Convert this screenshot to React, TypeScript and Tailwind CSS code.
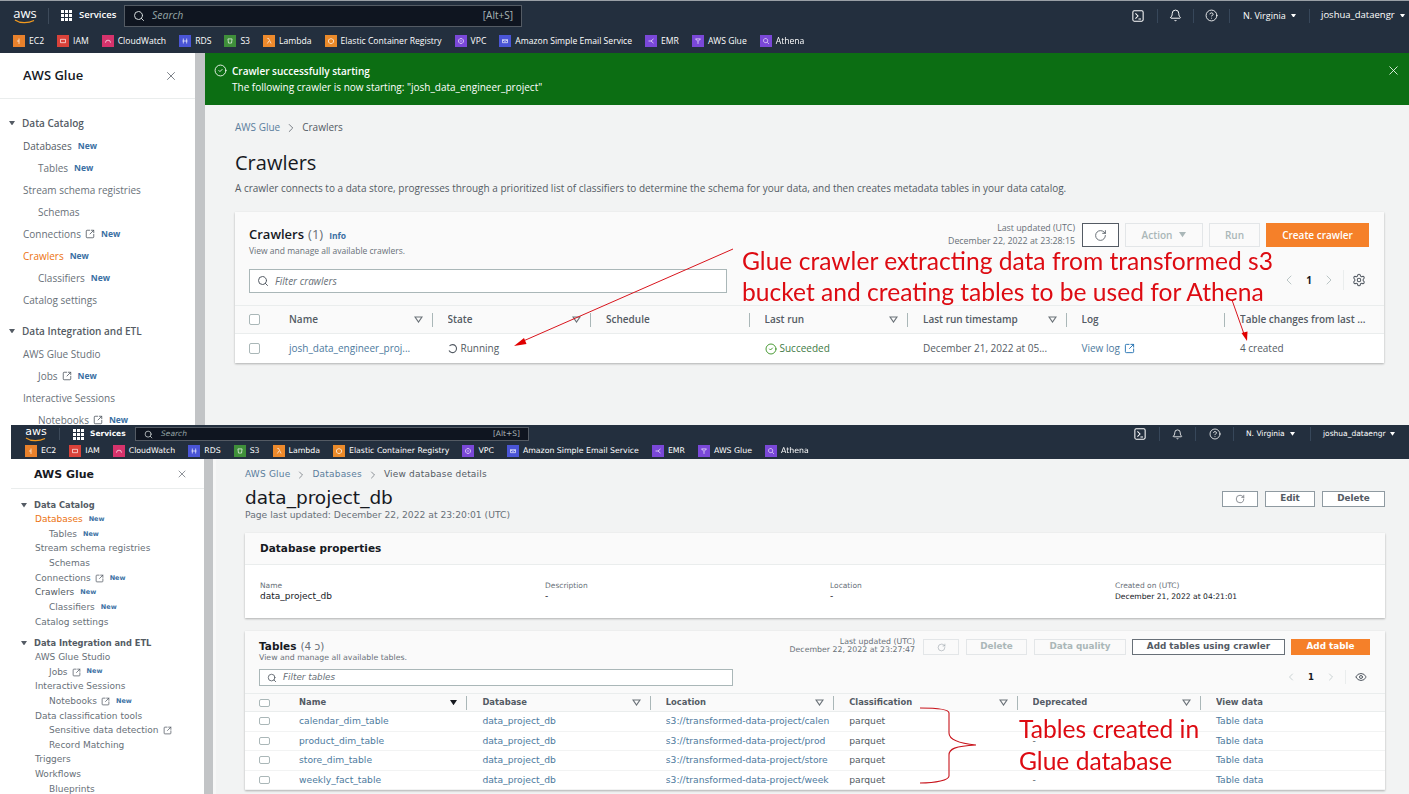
import { ChevronLeft, ChevronRight, CircleCheck, CircleHelp, Bell, Eye, RotateCw, Search, Settings, SquareArrowOutUpRight, X } from "lucide-react";

type Bookmark = { label: string; color: string; glyph: string };
type SideItem = { label: string; level?: 1 | 2; section?: boolean; isNew?: boolean; ext?: boolean };

const bookmarks: Bookmark[] = [
  { label: "EC2", color: "bg-[#e8812c]", glyph: "M6 3v3H3.5M6 6v3.5" },
  { label: "IAM", color: "bg-[#d9423a]", glyph: "M3 4h6v4H3z" },
  { label: "CloudWatch", color: "bg-[#d6336c]", glyph: "M3 8a3 3 0 1 1 6 0" },
  { label: "RDS", color: "bg-[#4a55d6]", glyph: "M4 3v6M8 3v6M3 6h6" },
  { label: "S3", color: "bg-[#3f8f3a]", glyph: "M3.5 3.5h5l-.7 5h-3.6z" },
  { label: "Lambda", color: "bg-[#ed8a2c]", glyph: "M4 3h1.5L8.5 9M6 6 4 9" },
  { label: "Elastic Container Registry", color: "bg-[#ea8a2a]", glyph: "M6 3l3 1.6v3L6 9.400 3 7.600v-3z" },
  { label: "VPC", color: "bg-[#7a48d8]", glyph: "M6 3a3 3 0 1 0 .01 0M6 5v2" },
  { label: "Amazon Simple Email Service", color: "bg-[#4a55d6]", glyph: "M3 4.500h6v3.500H3zM3 4.500l3 2 3-2" },
  { label: "EMR", color: "bg-[#7a48d8]", glyph: "M3 6h3M6 6l3-2.500M6 6l3 2.500" },
  { label: "AWS Glue", color: "bg-[#7a48d8]", glyph: "M3 3.500h6L6 6.500zM6 6.500V9.500" },
  { label: "Athena", color: "bg-[#7a48d8]", glyph: "M5.500 3a2.500 2.500 0 1 0 .01 0M7.500 7.500 9.500 9.500" },
];

const sideItems = (extra: boolean): SideItem[] => [
  { label: "Data Catalog", section: true },
  { label: "Databases", level: 1, isNew: true },
  { label: "Tables", level: 2, isNew: true },
  { label: "Stream schema registries", level: 1 },
  { label: "Schemas", level: 2 },
  { label: "Connections", level: 1, ext: true, isNew: true },
  { label: "Crawlers", level: 1, isNew: true },
  { label: "Classifiers", level: 2, isNew: true },
  { label: "Catalog settings", level: 1 },
  { label: "Data Integration and ETL", section: true },
  { label: "AWS Glue Studio", level: 1 },
  { label: "Jobs", level: 2, ext: true, isNew: true },
  { label: "Interactive Sessions", level: 1 },
  { label: "Notebooks", level: 2, ext: true, isNew: true },
  ...(extra
    ? ([
        { label: "Data classification tools", level: 1 },
        { label: "Sensitive data detection", level: 2, ext: true },
        { label: "Record Matching", level: 2 },
        { label: "Triggers", level: 1 },
        { label: "Workflows", level: 1 },
        { label: "Blueprints", level: 2 },
      ] as SideItem[])
    : []),
];

function AwsLogo({ big }: { big: boolean }) {
  return (
    <div className={big ? "flex w-[24px] flex-col items-center" : "flex w-[22px] flex-col items-center"}>
      <span className={big ? "text-[13px] leading-[11px] text-white" : "text-[11px] leading-[10px] text-white"}>aws</span>
      <svg width="22" height="5" viewBox="0 0 22 5" fill="none">
        <path d="M1 1c5 3.500 13 3.500 19 .5" stroke="#f29a1f" strokeWidth="1.300" />
      </svg>
    </div>
  );
}

function GridIcon({ size }: { size: number }) {
  const cells = [0, 1, 2];
  return (
    <svg width={size} height={size} viewBox="0 0 11 11" fill="#fff">
      {cells.map((r) => cells.map((c) => <rect key={`${r}-${c}`} x={c * 4} y={r * 4} width="3" height="3" />))}
    </svg>
  );
}

function TerminalIcon({ size }: { size: number }) {
  return (
    <svg width={size} height={size} viewBox="0 0 14 14" fill="none" stroke="#fff" strokeWidth="1.200">
      <rect x="1" y="1" width="12" height="12" rx="1.500" />
      <path d="M4 4l3 3-3 3M7.500 10.500H10.500" />
    </svg>
  );
}

function Caret({ className }: { className: string }) {
  return (
    <svg viewBox="0 0 8 6" className={className} fill="currentColor">
      <path d="M0 0h8L4 6z" />
    </svg>
  );
}

function FilterCaret() {
  return (
    <svg width="9" height="7" viewBox="0 0 9 7" fill="none" stroke="#6b7278" strokeWidth="1.200" className="shrink-0">
      <path d="M1 1h7L4.500 6z" />
    </svg>
  );
}

function Spinner() {
  return (
    <svg width="10" height="10" viewBox="0 0 10 10" fill="none" stroke="#545b64" strokeWidth="1.100">
      <path d="M1.500 2a4 4 0 1 1-.5 4.500" />
    </svg>
  );
}

function TopNav({ big }: { big: boolean }) {
  return (
    <div className={big ? "h-[53px] shrink-0 border-t border-[#9aa0a6] bg-[#232f3e] text-white font-['Open_Sans',sans-serif]" : "h-[34px] shrink-0 bg-[#232f3e] text-white font-['DejaVu_Sans',sans-serif]"}>
      <div className={big ? "flex h-[29px] items-center pl-[13px]" : "flex h-[18px] items-center pl-[14px]"}>
        <AwsLogo big={big} />
        <div className={big ? "ml-[11px] h-[16px] w-px bg-[#3d4a5a]" : "ml-[12px] h-[12px] w-px bg-[#3d4a5a]"} />
        <div className={big ? "ml-[12px]" : "ml-[13px]"}>
          <GridIcon size={11} />
        </div>
        <span className={big ? "ml-[7px] w-[37px] text-[9.500px] font-semibold whitespace-nowrap" : "ml-[6px] w-[34px] text-[7.500px] font-semibold whitespace-nowrap"}>Services</span>
        <div className={big ? "ml-[8px] flex h-[22px] w-[398px] items-center border border-[#545b64] bg-[#0f1520] px-[8px]" : "ml-[11px] flex h-[14px] w-[394px] items-center border border-[#545b64] bg-[#0f1520] px-[8px]"}>
          <Search size={big ? 12 : 9} strokeWidth={2} className="text-[#d5dbdb]" />
          <span className={big ? "ml-[7px] flex-1 text-[10.500px] italic text-[#95a5a6]" : "ml-[8px] flex-1 text-[7.500px] italic text-[#95a5a6]"}>Search</span>
          <span className={big ? "text-[10px] text-[#aab7b8]" : "text-[7.500px] text-[#aab7b8]"}>[Alt+S]</span>
        </div>
        <div className="flex-1" />
        <div className="flex items-center">
          <div className="flex w-[38px] justify-center">
            <TerminalIcon size={12} />
          </div>
          <div className="h-[14px] w-px bg-[#37475a]" />
          <div className="flex w-[35px] justify-center">
            <Bell size={big ? 13 : 11} strokeWidth={1.800} />
          </div>
          <div className="h-[14px] w-px bg-[#37475a]" />
          <div className={big ? "flex w-[35px] justify-center" : "flex w-[37px] justify-center"}>
            <CircleHelp size={big ? 13 : 12} strokeWidth={1.600} />
          </div>
          <div className="h-[14px] w-px bg-[#37475a]" />
          <div className={big ? "flex w-[79px] items-center gap-[5px] pl-[13px] text-[9px]" : "flex w-[76px] items-center gap-[5px] pl-[12px] text-[7.500px]"}>
            <span>N. Virginia</span>
            <Caret className="w-[5px]" />
          </div>
          <div className="h-[14px] w-px bg-[#37475a]" />
          <div className={big ? "flex w-[99px] items-center gap-[5px] pl-[11px] text-[9.500px]" : "flex w-[98px] items-center gap-[4px] pl-[12px] text-[7.500px]"}>
            <span>joshua_dataengr</span>
            <Caret className="w-[5px]" />
          </div>
        </div>
      </div>
      <div className={big ? "flex h-[23px] items-center gap-[13px] pl-[13px]" : "flex h-[16px] items-center gap-[13px] pl-[14px]"}>
        {bookmarks.map((b) => (
          <div key={b.label} className={big ? "flex items-center gap-[4px] text-[8.600px] whitespace-nowrap" : "flex items-center gap-[4px] text-[7.800px] whitespace-nowrap"}>
            <span className={`flex h-[12px] w-[12px] items-center justify-center ${b.color}`}>
              <svg width="10" height="10" viewBox="0 0 12 12" fill="none" stroke="#fff" strokeOpacity="0.800" strokeWidth="1">
                <path d={b.glyph} />
              </svg>
            </span>
            <span>{b.label}</span>
          </div>
        ))}
      </div>
    </div>
  );
}

function Sidebar({ big, active, dark }: { big: boolean; active: string; dark: string }) {
  const items = sideItems(!big);
  return (
    <div className={big ? "flex w-[205px] shrink-0 font-['Open_Sans',sans-serif]" : "flex w-[205px] shrink-0 font-['DejaVu_Sans',sans-serif]"}>
      <div className={big ? "w-[195px] bg-white" : "w-[193px] bg-white"}>
        <div className={big ? "flex h-[46px] items-center justify-between border-b border-[#eaeded] pl-[23px] pr-[17px]" : "flex h-[30px] items-center justify-between border-b border-[#eaeded] pl-[23px] pr-[16px]"}>
          <span className={big ? "text-[13px] font-semibold text-[#16191f]" : "mt-[3px] text-[11px] font-semibold text-[#16191f]"}>AWS Glue</span>
          <X size={big ? 14 : 12} strokeWidth={1.300} className="text-[#545b64]" />
        </div>
        <div className={big ? "pt-[12px]" : "pt-[9px]"}>
          {items.map((item) => {
            const color = item.label === active ? "text-[#ec7211]" : item.label === dark ? "text-[#545b64] font-medium" : "text-[#687078]";
            const indent = item.section ? (big ? "pl-[9px]" : "pl-[10px]") : item.level === 2 ? "pl-[38px]" : big ? "pl-[23px]" : "pl-[24px]";
            const sectionGap = item.label === "Data Integration and ETL" ? (big ? "mt-[8px]" : "mt-[6px]") : "";
            const height = big ? (item.section ? "h-[24px]" : "h-[22px]") : "h-[14.650px]";
            return (
              <div key={item.label} className={`flex items-center ${height} ${indent} ${sectionGap} ${big ? "text-[10px]" : "text-[9px]"} whitespace-nowrap`}>
                {item.section && <Caret className="mr-[7px] w-[6px] text-[#545b64]" />}
                <span className={item.section ? (big ? "font-semibold text-[#545b64]" : "text-[8.300px] font-semibold text-[#545b64]") : color}>{item.label}</span>
                {item.ext && <SquareArrowOutUpRight size={big ? 10 : 9} strokeWidth={2} className="ml-[4px] text-[#545b64]" />}
                {item.isNew && <span className={big ? "ml-[6px] text-[8.500px] font-bold text-[#3a6fa3]" : "ml-[6px] text-[6.500px] font-bold text-[#3a6fa3]"}>New</span>}
              </div>
            );
          })}
        </div>
      </div>
      <div className={big ? "w-[10px] bg-[#c2c4c6]" : "w-[9px] bg-[#c2c4c6]"} />
      {!big && <div className="w-[3px] bg-[#f7f7f7]" />}
    </div>
  );
}

function Button({ children, className }: { children: React.ReactNode; className: string }) {
  return <div className={`flex shrink-0 items-center justify-center border font-semibold ${className}`}>{children}</div>;
}

function Th({ label, filter = true, last = false, sort = false }: { label: string; filter?: boolean; last?: boolean; sort?: boolean }) {
  return (
    <div className={last ? "flex items-center whitespace-nowrap" : "flex items-center pr-[15px]"}>
      <span className="flex-1 truncate font-semibold text-[#545b64]">{label}</span>
      {filter && (sort ? <Caret className="w-[7px] text-[#16191f]" /> : <FilterCaret />)}
      {!last && <div className="ml-[9px] h-[14px] w-px bg-[#aab7b8]" />}
    </div>
  );
}

function Checkbox({ size }: { size: string }) {
  return <div className={`rounded-[2px] border border-[#aab7b8] bg-white ${size}`} />;
}

function CrawlerShot() {
  return (
    <div className="flex h-[425px] shrink-0 flex-col overflow-hidden blur-[0.3px]">
      <TopNav big />
      <div className="flex flex-1 overflow-hidden">
        <Sidebar big active="Crawlers" dark="Databases" />
        <div className="min-w-0 flex-1 bg-[#f2f3f3] font-['Open_Sans',sans-serif]">
          <div className="flex h-[52px] items-start justify-between bg-[#0c6e13] pl-[9px] pr-[8px] pt-[10px] text-white">
            <div className="flex gap-[5px]">
              <CircleCheck size={13} strokeWidth={1.600} className="mt-[1px]" />
              <div className="text-[10px] leading-[16px]">
                <div className="font-semibold">Crawler successfully starting</div>
                <div>The following crawler is now starting: "josh_data_engineer_project"</div>
              </div>
            </div>
            <X size={15} strokeWidth={1.300} />
          </div>
          <div className="pl-[30px] pr-[25px]">
            <div className="mt-[15px] flex h-[15px] items-center text-[10px] text-[#5a7d9c]">
              <span>AWS Glue</span>
              <ChevronRight size={14} strokeWidth={1.300} className="mx-[4px] text-[#545b64]" />
              <span className="font-medium text-[#545b64]">Crawlers</span>
            </div>
            <div className="mt-[14px] h-[28px] text-[20px] leading-[28px] text-[#16191f]">Crawlers</div>
            <div className="mt-[4px] text-[10px] leading-[14px] text-[#545b64]">
              A crawler connects to a data store, progresses through a prioritized list of classifiers to determine the schema for your data, and then creates metadata tables in your data catalog.
            </div>
            <div className="mt-[17px] bg-[#fafafa] shadow-[0_1px_2px_rgba(0,0,0,0.28)]">
              <div className="flex h-[93px] pl-[14px] pr-[15px] pt-[11px]">
                <div className="min-w-0 flex-1">
                  <div className="mt-[3px] flex items-baseline text-[13px] leading-[16px]">
                    <span className="font-semibold text-[#16191f]">Crawlers</span>
                    <span className="ml-[4px] font-normal text-[#687078]">(1)</span>
                    <span className="ml-[6px] text-[8.500px] font-bold text-[#3a6fa3]">Info</span>
                  </div>
                  <div className="mt-[1px] text-[8.500px] leading-[12px] text-[#687078]">View and manage all available crawlers.</div>
                  <div className="mt-[12px] flex h-[24px] w-[478px] items-center border border-[#aab7b8] bg-white px-[7px]">
                    <Search size={12} strokeWidth={2} className="text-[#545b64]" />
                    <span className="ml-[6px] text-[10px] italic text-[#687078]">Filter crawlers</span>
                  </div>
                </div>
                <div className="flex flex-col items-end">
                  <div className="flex items-start">
                    <div className="-mt-[1px] mr-[7px] text-right text-[8.800px] leading-[13px] text-[#687078]">
                      <div>Last updated (UTC)</div>
                      <div>December 22, 2022 at 23:28:15</div>
                    </div>
                    <Button className="h-[24px] w-[37px] border-[#545b64] bg-white text-[#545b64]">
                      <RotateCw size={13} strokeWidth={1.600} />
                    </Button>
                    <Button className="ml-[6px] h-[24px] w-[78px] gap-[7px] border-[#e3e6e8] text-[10px] text-[#aab7b8]">
                      Action <Caret className="w-[7px]" />
                    </Button>
                    <Button className="ml-[6px] h-[24px] w-[51px] border-[#e3e6e8] text-[10px] text-[#aab7b8]">Run</Button>
                    <Button className="ml-[6px] h-[24px] w-[103px] border-[#f58029] bg-[#f58029] text-[10px] font-bold text-white">Create crawler</Button>
                  </div>
                  <div className="mr-[3px] mt-[22px] flex items-center text-[#687078]">
                    <ChevronLeft size={16} strokeWidth={1.200} className="text-[#aab7b8]" />
                    <span className="mx-[9px] text-[10px] font-bold text-[#16191f]">1</span>
                    <ChevronRight size={16} strokeWidth={1.200} className="text-[#aab7b8]" />
                    <div className="ml-[6px] mr-[8px] h-[20px] w-px bg-[#eaeded]" />
                    <Settings size={14} strokeWidth={1.800} className="text-[#545b64]" />
                  </div>
                </div>
              </div>
              <div className="grid h-[29px] grid-cols-[54px_repeat(6,158.500px)_1fr] items-center border-y border-[#eaeded] bg-[#fafafa] text-[10px]">
                <div className="pl-[14px]"><Checkbox size="h-[11px] w-[11px]" /></div>
                <Th label="Name" />
                <Th label="State" />
                <Th label="Schedule" filter={false} />
                <Th label="Last run" />
                <Th label="Last run timestamp" />
                <Th label="Log" filter={false} />
                <Th label="Table changes from last ..." filter={false} last />
              </div>
              <div className="grid h-[29px] grid-cols-[54px_repeat(6,158.500px)_1fr] items-center bg-white text-[10px] text-[#545b64]">
                <div className="pl-[14px]"><Checkbox size="h-[11px] w-[11px]" /></div>
                <span className="text-[#4d7a9e]">josh_data_engineer_proj...</span>
                <span className="flex items-center gap-[3px]"><Spinner />Running</span>
                <span />
                <span className="flex items-center gap-[3px] text-[#3f7a45]"><CircleCheck size={12} strokeWidth={1.600} className="text-[#1d8102]" />Succeeded</span>
                <span>December 21, 2022 at 05...</span>
                <span className="flex items-center gap-[4px] text-[#4d7a9e]">View log <SquareArrowOutUpRight size={11} strokeWidth={2} className="text-[#1f6fb0]" /></span>
                <span>4 created</span>
              </div>
            </div>
          </div>
        </div>
      </div>
    </div>
  );
}

const detailFields = [
  { label: "Name", value: "data_project_db", size: "text-[9px]" },
  { label: "Description", value: "-", size: "text-[9px]" },
  { label: "Location", value: "-", size: "text-[9px]" },
  { label: "Created on (UTC)", value: "December 21, 2022 at 04:21:01", size: "text-[7.600px]" },
];

const tableRows = [
  { name: "calendar_dim_table", loc: "s3://transformed-data-project/calen", deprecated: "" },
  { name: "product_dim_table", loc: "s3://transformed-data-project/prod", deprecated: "-" },
  { name: "store_dim_table", loc: "s3://transformed-data-project/store", deprecated: "" },
  { name: "weekly_fact_table", loc: "s3://transformed-data-project/week", deprecated: "-" },
];

function DatabaseShot() {
  return (
    <div className="ml-[11px] flex min-h-0 flex-1 flex-col overflow-hidden blur-[0.3px]">
      <TopNav big={false} />
      <div className="flex flex-1 overflow-hidden">
        <Sidebar big={false} active="Databases" dark="Crawlers" />
        <div className="min-w-0 flex-1 bg-[#f2f3f3] pl-[29px] pr-[24px] font-['DejaVu_Sans',sans-serif]">
          <div className="mt-[10px] flex h-[12px] items-center text-[9px] tracking-[0.2px] text-[#5a7d9c]">
            <span>AWS Glue</span>
            <ChevronRight size={12} strokeWidth={1.300} className="mx-[5px] text-[#545b64]" />
            <span>Databases</span>
            <ChevronRight size={12} strokeWidth={1.300} className="mx-[5px] text-[#545b64]" />
            <span className="text-[#545b64]">View database details</span>
          </div>
          <div className="flex items-start justify-between">
            <div>
              <div className="mt-[6px] text-[18.500px] leading-[22px] text-[#16191f]">data_project_db</div>
              <div className="text-[9.200px] leading-[11px] text-[#687078]">Page last updated: December 22, 2022 at 23:20:01 (UTC)</div>
            </div>
            <div className="mt-[10px] flex gap-[7px] text-[8.800px]">
              <Button className="h-[16px] w-[36px] border-[#8f9aa1] bg-white text-[#545b64]"><RotateCw size={10} strokeWidth={1.600} /></Button>
              <Button className="h-[16px] w-[50px] border-[#8f9aa1] bg-white text-[#545b64]">Edit</Button>
              <Button className="h-[16px] w-[63px] border-[#8f9aa1] bg-white text-[#545b64]">Delete</Button>
            </div>
          </div>
          <div className="mt-[13px] h-[85px] bg-white shadow-[0_1px_2px_rgba(0,0,0,0.28)]">
            <div className="flex h-[32px] items-center border-b border-[#eaeded] bg-[#fafafa] pl-[15px] text-[10.500px] font-semibold text-[#16191f]">Database properties</div>
            <div className="grid grid-cols-[repeat(4,285px)] pl-[15px] pt-[15px] leading-[11px]">
              {detailFields.map((f) => (
                <div key={f.label}>
                  <div className="text-[7.500px] text-[#687078]">{f.label}</div>
                  <div className={`${f.size} text-[#16191f]`}>{f.value}</div>
                </div>
              ))}
            </div>
          </div>
          <div className="mt-[13px] bg-[#fafafa] shadow-[0_1px_2px_rgba(0,0,0,0.28)]">
            <div className="flex h-[62px] pl-[14px] pr-[15px] pt-[8px]">
              <div className="min-w-0 flex-1">
                <div className="flex items-baseline text-[10.500px] leading-[14px]">
                  <span className="font-semibold text-[#16191f]">Tables</span>
                  <span className="ml-[4px] text-[#687078]">(4 ↄ)</span>
                </div>
                <div className="text-[7.800px] leading-[9px] text-[#687078]">View and manage all available tables.</div>
                <div className="mt-[7px] flex h-[17px] w-[474px] items-center border border-[#aab7b8] bg-white px-[7px]">
                  <Search size={10} strokeWidth={2} className="text-[#545b64]" />
                  <span className="ml-[6px] text-[8.800px] italic text-[#687078]">Filter tables</span>
                </div>
              </div>
              <div className="flex flex-col items-end">
                <div className="flex items-start text-[8.800px]">
                  <div className="-mt-[1px] mr-[8px] text-right text-[7.800px] leading-[8px] text-[#687078]">
                    <div>Last updated (UTC)</div>
                    <div>December 22, 2022 at 23:27:47</div>
                  </div>
                  <Button className="h-[16px] w-[36px] border-[#e3e6e8] text-[#8f9aa1]"><RotateCw size={9} strokeWidth={1.400} /></Button>
                  <Button className="ml-[7px] h-[16px] w-[61px] border-[#e3e6e8] text-[#aab7b8]">Delete</Button>
                  <Button className="ml-[7px] h-[16px] w-[92px] border-[#e3e6e8] text-[#aab7b8]">Data quality</Button>
                  <Button className="ml-[6px] h-[16px] w-[153px] border-[#687078] bg-white text-[#545b64]">Add tables using crawler</Button>
                  <Button className="ml-[6px] h-[16px] w-[79px] border-[#f58029] bg-[#f58029] text-white">Add table</Button>
                </div>
                <div className="mr-[3px] mt-[15px] flex items-center">
                  <ChevronLeft size={12} strokeWidth={1.200} className="text-[#aab7b8]" />
                  <span className="mx-[11px] text-[8.500px] font-bold text-[#16191f]">1</span>
                  <ChevronRight size={12} strokeWidth={1.200} className="text-[#aab7b8]" />
                  <div className="ml-[8px] mr-[9px] h-[14px] w-px bg-[#eaeded]" />
                  <Eye size={12} strokeWidth={2} className="text-[#545b64]" />
                </div>
              </div>
            </div>
            <div className="grid h-[19px] grid-cols-[54px_repeat(5,183.400px)_1fr] items-center border-y border-[#eaeded] text-[8.400px]">
              <div className="pl-[14px]"><Checkbox size="h-[8px] w-[11px]" /></div>
              <Th label="Name" sort />
              <Th label="Database" />
              <Th label="Location" />
              <Th label="Classification" />
              <Th label="Deprecated" />
              <Th label="View data" filter={false} last />
            </div>
            {tableRows.map((row) => (
              <div key={row.name} className="grid h-[19.500px] grid-cols-[54px_repeat(5,183.400px)_1fr] items-center border-b border-[#f2f3f3] bg-white text-[9.200px] text-[#545b64]">
                <div className="pl-[14px]"><Checkbox size="h-[8px] w-[11px]" /></div>
                <span className="text-[#4d7a9e]">{row.name}</span>
                <span className="text-[#4d7a9e]">data_project_db</span>
                <span className="overflow-hidden whitespace-nowrap text-[#4d7a9e]">{row.loc}</span>
                <span>parquet</span>
                <span>{row.deprecated}</span>
                <span className="text-[#4d7a9e]">Table data</span>
              </div>
            ))}
          </div>
        </div>
      </div>
    </div>
  );
}

export default function App() {
  return (
    <div className="relative flex h-[794px] w-[1409px] flex-col overflow-hidden bg-white">
      <CrawlerShot />
      <DatabaseShot />

      {/* red notes pasted over the two screenshots */}
      <svg width="1409" height="794" viewBox="0 0 1409 794" fill="none" className="pointer-events-none absolute left-0 top-0">
        <path d="M733 249 521 342" stroke="#d8141c" strokeWidth="1" />
        <path d="M514 346l10-8 2.500 6z" fill="#e00000" />
        <path d="M1232 300l12 34" stroke="#d8141c" strokeWidth="1" />
        <path d="M1247 341l-5.500-8 6-1.500z" fill="#e00000" />
        <path d="M920 708c16 0 29 1 29 5v20c0 5 6 10 27 12-21 1-27 4-27 10v21c0 4-13 7-29 7" stroke="#c8141c" strokeWidth="1.100" />
      </svg>
      <div className="absolute left-[742px] top-[248px] font-['Lato',sans-serif] text-[24.600px] leading-[26px] whitespace-nowrap text-[#dd0b12]">
        <div>Glue crawler extracting data from transformed s3</div>
        <div className="mt-[5px]">bucket and creating tables to be used for Athena</div>
      </div>
      <div className="absolute left-[1019px] top-[716px] font-['Lato',sans-serif] text-[24.600px] leading-[26px] whitespace-nowrap text-[#dd0b12]">
        <div>Tables created in</div>
        <div className="mt-[6px]">Glue database</div>
      </div>
    </div>
  );
}
